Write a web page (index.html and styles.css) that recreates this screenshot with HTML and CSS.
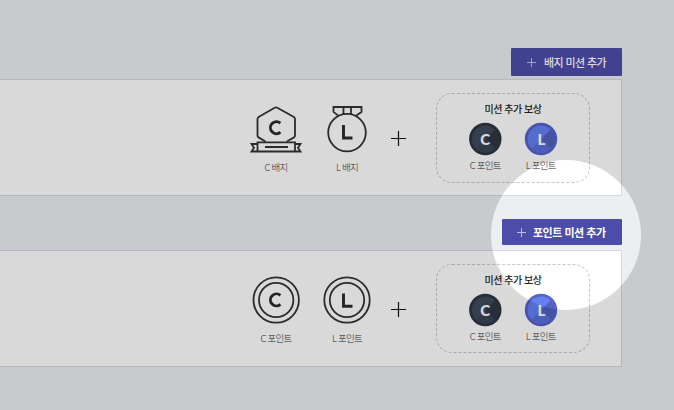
FILE: index.html
```html
<!DOCTYPE html>
<html lang="ko">
<head>
<meta charset="utf-8">
<title>미션 추가</title>
<link rel="stylesheet" href="styles.css">
</head>
<body>
<svg width="0" height="0" class="defs">
  <defs>
    <symbol id="plus" viewBox="0 0 16 16"><path d="M7.5 0V15M0 7.5H15" fill="none" stroke="currentColor" stroke-width="1.2"/></symbol>
    <symbol id="plus-sm" viewBox="0 0 9 9"><path d="M4.5 0V9M0 4.5H9" fill="none" stroke="currentColor" stroke-width="1"/></symbol>
    <symbol id="coin-c" viewBox="0 0 34 34">
      <circle cx="17.3" cy="17" r="16.2" fill="#2d3641"/>
      <circle cx="17.3" cy="17" r="13.4" fill="#3f4b5b"/>
      <path d="M17.3 17L26.8 7.5A13.4 13.4 0 0 1 26.8 26.5Z" fill="#303743"/>
      <path d="M17.3 17L26.8 26.5A13.4 13.4 0 0 1 7.8 26.5Z" fill="#394453"/>
      <text x="17.2" y="22.5" class="coin-letter">C</text>
    </symbol>
    <symbol id="coin-l" viewBox="0 0 34 34">
      <circle cx="17" cy="17" r="16.2" fill="#5762cb"/>
      <circle cx="17" cy="17" r="13.4" fill="#6480f3"/>
      <path d="M17 17L26.5 7.5A13.4 13.4 0 0 1 26.5 26.5Z" fill="#4f62bd"/>
      <path d="M17 17L26.5 26.5A13.4 13.4 0 0 1 7.5 26.5Z" fill="#5870d8"/>
      <text x="17.3" y="22.5" class="coin-letter">L</text>
    </symbol>
  </defs>
</svg>
<main class="page">
  <section class="mission">
    <button class="add"><svg class="add-icon"><use href="#plus-sm"/></svg><span>배지 미션 추가</span></button>
    <div class="card">
      <div class="item">
        <svg class="emblem" viewBox="0 0 52 50">
          <g class="line">
            <path d="M15.5 38.5L8.5 34.4Q7.5 33.8 7.5 32.6V16Q7.5 14.7 8.6 14L24.7 4.7Q26 4 27.3 4.7L43.9 14Q45 14.7 45 16V32.6Q45 33.8 44 34.4L36.8 38.5"/>
            <path d="M7.5 39.3H45V48.5H7.5ZM7.5 41H1.5L4 44.8L1.5 48.5H7.5M45 41H50.5L48 44.8L50.5 48.5H45M15 44H38"/>
          </g>
          <path class="letter-c" d="M30.4 20.2A6 6 0 1 0 30.4 29.2"/>
        </svg>
        <span class="label">C 배지</span>
      </div>
      <div class="item">
        <svg class="emblem" viewBox="0 0 52 50">
          <g class="line">
            <circle cx="26" cy="29.6" r="18.8"/>
            <path d="M17.5 12.9L12.5 8.9V4H40.5V8.9L34.5 12.9M22.5 10.9V4M30 10.9V4"/>
          </g>
          <path class="letter-l" d="M22.5 22V35H31.5"/>
        </svg>
        <span class="label">L 배지</span>
      </div>
      <svg class="plus"><use href="#plus"/></svg>
      <div class="reward">
        <strong class="reward-title">미션 추가 보상</strong>
        <div class="coins">
          <div class="coin"><svg class="coin-icon"><use href="#coin-c"/></svg><span class="label">C 포인트</span></div>
          <div class="coin"><svg class="coin-icon"><use href="#coin-l"/></svg><span class="label">L 포인트</span></div>
        </div>
      </div>
    </div>
  </section>
  <section class="mission point">
    <button class="add"><svg class="add-icon"><use href="#plus-sm"/></svg><span>포인트 미션 추가</span></button>
    <div class="card">
      <div class="item">
        <svg class="emblem" viewBox="0 0 52 50">
          <g class="line"><circle cx="26.2" cy="27" r="22.7"/><circle cx="26.2" cy="27" r="17.2"/></g>
          <path class="letter-c" d="M30.4 22.4A6 6 0 1 0 30.4 31.4"/>
        </svg>
        <span class="label">C 포인트</span>
      </div>
      <div class="item">
        <svg class="emblem" viewBox="0 0 52 50">
          <g class="line"><circle cx="26" cy="27" r="22.7"/><circle cx="26" cy="27" r="17.2"/></g>
          <path class="letter-l" d="M22.5 20.4V33.2H31.5"/>
        </svg>
        <span class="label">L 포인트</span>
      </div>
      <svg class="plus"><use href="#plus"/></svg>
      <div class="reward">
        <strong class="reward-title">미션 추가 보상</strong>
        <div class="coins">
          <div class="coin"><svg class="coin-icon"><use href="#coin-c"/></svg><span class="label">C 포인트</span></div>
          <div class="coin"><svg class="coin-icon"><use href="#coin-l"/></svg><span class="label">L 포인트</span></div>
        </div>
      </div>
    </div>
  </section>
  <div class="spotlight"></div>
</main>
</body>
</html>
```
FILE: styles.css
```css
* { box-sizing: border-box; }
body {
  margin: 0;
  font-family: "Noto Sans CJK KR", sans-serif;
}
.defs { position: absolute; }
.page {
  position: relative;
  width: 674px;
  height: 410px;
  padding: 48px 52px 0 0;
  overflow: hidden;
  background: #ebeff2;
}
.mission {
  display: flex;
  flex-direction: column;
  align-items: flex-end;
  gap: 3px;
  margin-bottom: 23px;
}
.add {
  display: flex;
  align-items: center;
  gap: 8px;
  height: 28px;
  width: 111px;
  padding: 0 0 0 16px;
  border: 0;
  border-radius: 1px;
  background: #4c4dab;
  color: #fff;
  font: 500 11px/16px "Noto Sans CJK KR", sans-serif;
  letter-spacing: -0.6px;
  white-space: nowrap;
}
.add-icon { width: 9px; height: 9px; opacity: .65; }
.card {
  display: flex;
  align-items: flex-start;
  justify-content: flex-end;
  width: 100%;
  height: 117px;
  padding: 13px 31px 0 0;
  border: 1px solid #d6d9e2;
  border-left: 0;
  background: #fff;
}
.item {
  display: flex;
  flex-direction: column;
  align-items: center;
  width: 71px;
  padding-top: 10px;
}
.emblem { width: 52px; height: 50px; overflow: visible; }
.line { fill: none; stroke: #333; stroke-width: 1.8; }
.letter-c, .letter-l { fill: none; stroke: #2b2b2b; stroke-width: 2.9; }
.label {
  color: #333;
  font-size: 9.5px;
  font-weight: 300;
  line-height: 14px;
  letter-spacing: -0.75px;
  white-space: nowrap;
}
.item .label { margin-top: 7px; }
.plus { width: 16px; height: 16px; margin: 38px 29.5px 0 8px; color: #111; }
.reward {
  display: flex;
  flex-direction: column;
  align-items: center;
  width: 154px;
  height: 90px;
  padding-top: 7px;
  border: 1px dashed #c6c6c6;
  border-radius: 16px;
}
.reward-title {
  color: #222;
  font-size: 10px;
  font-weight: 500;
  line-height: 15px;
  letter-spacing: -0.45px;
}
.coins { display: flex; margin-top: 5.5px; }
.coin { display: flex; flex-direction: column; align-items: center; width: 55.5px; }
.coin-icon { width: 34px; height: 34px; }
.coin .label { margin-top: 2.5px; }
.coin-letter {
  fill: #fff;
  font: 900 15px Lato, sans-serif;
  text-anchor: middle;
}
.point { gap: 5px; }
.point .add { width: 120px; height: 26px; padding-left: 15px; font-weight: 700; letter-spacing: -0.5px; gap: 7px; }
.point .item { padding-top: 9px; }
.point .item .label { margin-top: 8px; }
.point .reward { height: 89px; }
.spotlight {
  position: absolute;
  left: 491px;
  top: 160px;
  width: 150px;
  height: 150px;
  border-radius: 50%;
  box-shadow: 0 0 0 900px rgba(0, 0, 0, .15);
}
```
